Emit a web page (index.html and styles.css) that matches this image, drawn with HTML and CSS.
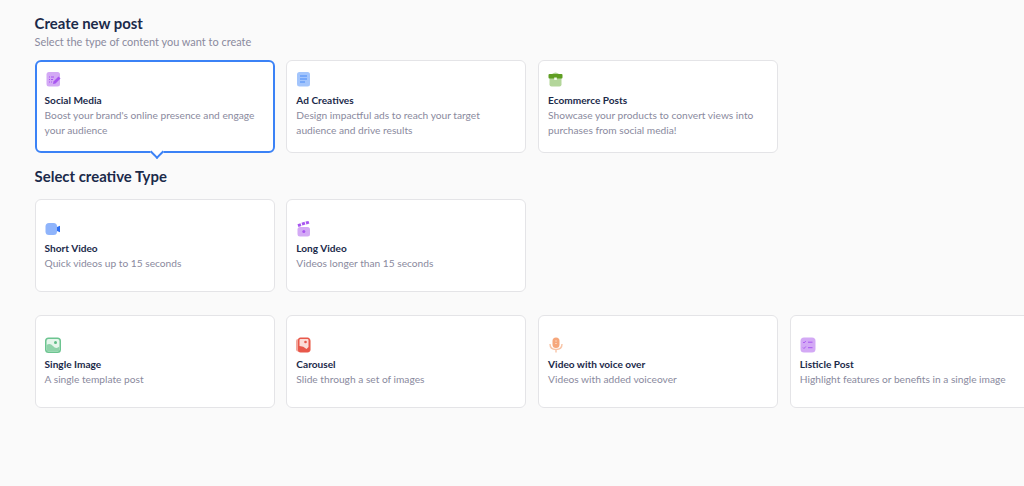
FILE: index.html
```html
<!DOCTYPE html>
<html lang="en">
  <head>
    <meta charset="UTF-8">
    <meta name="viewport" content="width=device-width, initial-scale=1.0">
    <title>Create new post</title>
    <link rel="stylesheet" href="styles.css">
  </head>
  <body>
    <div class="page">
      <h1 class="title">Create new post</h1>
      <p class="subtitle">Select the type of content you want to create</p>

      <div class="card-row first-row">
        <div class="card selected">
          <svg class="icon" viewBox="0 0 16 16">
            <rect x="1.500" y="1" width="13.500" height="14.500" rx="2.500" fill="#d3a9f5"/>
            <path d="M4 6h1M6 6h3M4 8.500h1M6 8.500h2M4 11h1M6 11h1" stroke="#a855f0" stroke-width="1"/>
            <path d="M8.500 10.500l5-5 2 2-5 5-2.500.5z" fill="#a855f0"/>
          </svg>
          <h3 class="card-title">Social Media</h3>
          <p class="card-text">Boost your brand's online presence and engage your audience</p>
        </div>
        <div class="card">
          <svg class="icon" viewBox="0 0 16 16">
            <rect x="1" y="1" width="13" height="14.500" rx="2.500" fill="#a3c5fc"/>
            <path d="M4 5h7M4 8h7M4 11h5" stroke="#4a8cf7" stroke-width="1.200"/>
          </svg>
          <h3 class="card-title">Ad Creatives</h3>
          <p class="card-text">Design impactful ads to reach your target audience and drive results</p>
        </div>
        <div class="card">
          <svg class="icon" viewBox="0 0 16 16">
            <rect x="1.500" y="5" width="12" height="10.500" rx="2" fill="#b3d69a"/>
            <path d="M4 3q3.500-3 7 0z" fill="#b3d69a"/>
            <rect x="0.500" y="3" width="14" height="4.500" rx="1" fill="#5f9e22"/>
            <rect x="6.200" y="6.500" width="2.600" height="2.400" fill="#f4f9ee"/>
          </svg>
          <h3 class="card-title">Ecommerce Posts</h3>
          <p class="card-text">Showcase your products to convert views into purchases from social media!</p>
        </div>
      </div>

      <h2 class="section-title">Select creative Type</h2>

      <div class="card-row">
        <div class="card low">
          <svg class="icon" viewBox="0 0 16 16">
            <rect x="0.500" y="2" width="11.500" height="12" rx="3.500" fill="#8fb4fb"/>
            <path d="M12 6l3-1.200v6.400l-3-1.200z" fill="#2f6ff0"/>
          </svg>
          <h3 class="card-title">Short Video</h3>
          <p class="card-text">Quick videos up to 15 seconds</p>
        </div>
        <div class="card low">
          <svg class="icon" viewBox="0 0 16 16">
            <rect x="1.500" y="6" width="12.500" height="9.500" rx="2.500" fill="#d3a9f5"/>
            <path d="M1.500 3.200l3-1 .9 2.800-3 1zM5.500 1.800l3-1 .9 2.800-3 1zM9.500.6l3-.6.9 2.600-3 .8z" fill="#a855f0"/>
            <circle cx="7.800" cy="10.500" r="1.500" fill="#a855f0"/>
          </svg>
          <h3 class="card-title">Long Video</h3>
          <p class="card-text">Videos longer than 15 seconds</p>
        </div>
      </div>

      <div class="card-row last-row">
        <div class="card low">
          <svg class="icon" viewBox="0 0 16 16">
            <rect x="0" y="0.500" width="16" height="15.500" rx="3.500" fill="#6cc490"/>
            <rect x="1.500" y="2" width="13" height="12.500" rx="2" fill="#e6f6ec"/>
            <path d="M1.500 8q3.500-2.500 6.500 1t6.500.5v3q0 2-2 2h-9q-2 0-2-2z" fill="#8fd3aa"/>
            <circle cx="10.500" cy="5.500" r="1.500" fill="#5fbc86"/>
          </svg>
          <h3 class="card-title">Single Image</h3>
          <p class="card-text">A single template post</p>
        </div>
        <div class="card low">
          <svg class="icon" viewBox="0 0 16 16">
            <rect x="0" y="2" width="15" height="12.500" rx="2" fill="#f3a79c"/>
            <rect x="2" y="0.500" width="12" height="15" rx="2.500" fill="#e8584a"/>
            <path d="M3.500 3q0-1 1-1h7q1 0 1 1v7l-2 2q-3-3-7-3z" fill="#fbdcd7"/>
            <circle cx="9.500" cy="5" r="1.300" fill="#e8584a"/>
          </svg>
          <h3 class="card-title">Carousel</h3>
          <p class="card-text">Slide through a set of images</p>
        </div>
        <div class="card low">
          <svg class="icon" viewBox="0 0 16 16">
            <rect x="4.500" y="0.500" width="7" height="10.500" rx="3.500" fill="#f6a77c"/>
            <path d="M2 7q0 5.500 6 5.500t6-5.500M8 12.500v3" fill="none" stroke="#f8c4a6" stroke-width="1.400"/>
            <path d="M7 4h2M7 6.500h2" stroke="#fbd9c4" stroke-width="0.800"/>
          </svg>
          <h3 class="card-title">Video with voice over</h3>
          <p class="card-text">Videos with added voiceover</p>
        </div>
        <div class="card low">
          <svg class="icon" viewBox="0 0 16 16">
            <rect x="0.500" y="0.500" width="15" height="15" rx="3.500" fill="#d3a9f5"/>
            <path d="M3 5l1 1 1.800-2M3 10.500l1 1 1.800-2" fill="none" stroke="#a855f0" stroke-width="0.900"/>
            <path d="M8 5.200h4.500M8 10.700h4.500" stroke="#a855f0" stroke-width="1"/>
          </svg>
          <h3 class="card-title">Listicle Post</h3>
          <p class="card-text">Highlight features or benefits in a single image</p>
        </div>
      </div>
    </div>
  </body>
</html>
```

FILE: styles.css
```css
html, body {
  height: 100%;
  overflow: hidden;
}

body {
  font-family: Lato, "Open Sans", sans-serif;
  background-color: #fafafa;
  margin: 0;
}

.page {
  padding: 14px 0 0 34.6px;
}

.title {
  margin: 0;
  font-size: 14.9px;
  line-height: 18px;
  font-weight: 700;
  color: #1b2a4a;
}

.subtitle {
  margin: 3px 0 0;
  font-size: 10.95px;
  line-height: 14px;
  color: #8a8a9e;
}

.card-row {
  display: flex;
  gap: 11.75px;
  width: 1100px;
}

.first-row {
  margin-top: 11px;
}

.last-row {
  margin-top: 23px;
}

.section-title {
  margin: 14px 0;
  font-size: 14.9px;
  line-height: 18px;
  font-weight: 700;
  color: #1b2a4a;
}

.card {
  position: relative;
  box-sizing: border-box;
  width: 240px;
  height: 93px;
  padding: 10px 9px 0;
  background-color: #fff;
  border: 1px solid #e4e4e7;
  border-radius: 6px;
}

.card.low {
  padding-top: 21px;
}

.card.selected {
  border: 2px solid #3b82f6;
  padding: 9px 8px 0;
}

/* little pointer under the picked card */
.card.selected::after {
  content: "";
  position: absolute;
  left: 115px;
  bottom: -6px;
  width: 8px;
  height: 8px;
  background-color: #fff;
  border-right: 2px solid #3b82f6;
  border-bottom: 2px solid #3b82f6;
  transform: rotate(45deg);
}

.icon {
  display: block;
  width: 16px;
  height: 16px;
}

.card-title {
  margin: 6px 0 0;
  font-size: 10.1px;
  line-height: 14px;
  font-weight: 700;
  color: #1b2a4a;
}

.card.low .card-title {
  margin-top: 4px;
}

.card-text {
  margin: 1px 0 0;
  font-size: 10.2px;
  line-height: 14.5px;
  color: #8a8a9e;
}
```
